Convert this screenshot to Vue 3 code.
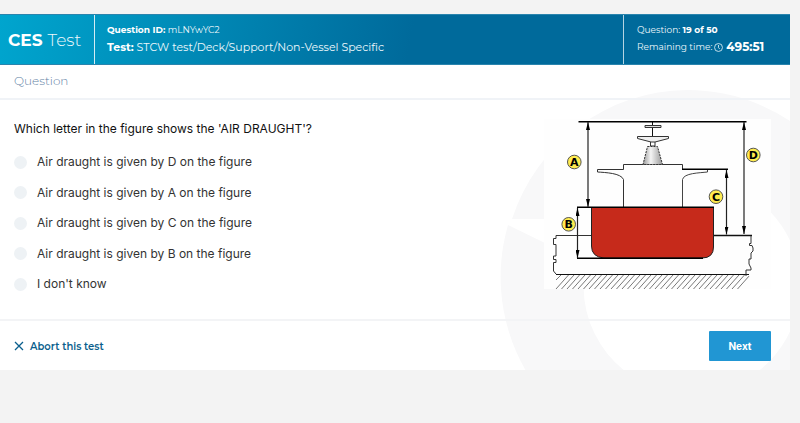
<template>
  <main class="test-card">
    <svg class="watermark" viewBox="0 0 290 281" aria-hidden="true">
      <path
        d="M 12 130 A 186 186 0 0 1 187 1 A 187 187 0 0 1 374 188 A 187 187 0 0 1 187 375 A 187 187 0 0 1 8 136 L 86 174 A 108 108 0 0 0 192 305 A 108 108 0 0 0 192 89 A 108 108 0 0 0 110 130 Z"
        fill="#f8f8f9"
      />
    </svg>

    <header class="test-header">
      <div class="brand"><strong>CES</strong> Test</div>
      <div class="test-info">
        <div class="question-id"><strong>Question ID:</strong> {{ test.questionId }}</div>
        <div class="test-name"><strong>Test:</strong> {{ test.name }}</div>
      </div>
      <div class="test-progress">
        <div>Question: <strong>{{ test.current }} of {{ test.total }}</strong></div>
        <div class="remaining">
          Remaining time:
          <svg class="clock" viewBox="0 0 10 10" aria-hidden="true">
            <circle cx="5" cy="5" r="4.4" />
            <path d="M5 2.2V5.2L6.4 6.6" />
          </svg>
          <strong class="time">{{ test.remaining }}</strong>
        </div>
      </div>
    </header>

    <h2 class="section-title">Question</h2>

    <section class="question-body">
      <div class="question-column">
        <p id="question-text" class="question-text">{{ question }}</p>
        <div class="answers" role="radiogroup" aria-labelledby="question-text">
          <label v-for="(answer, index) in answers" :key="index" class="answer">
            <input v-model="selected" type="radio" name="answer" :value="index" />
            <span>{{ answer }}</span>
          </label>
        </div>
      </div>

      <svg class="figure" viewBox="0 0 227 170" role="img" aria-labelledby="question-text">
        <defs>
          <linearGradient id="funnel">
            <stop offset="0" stop-color="#999" />
            <stop offset="0.4" stop-color="#f4f4f4" />
            <stop offset="1" stop-color="#999" />
          </linearGradient>
          <marker
            id="arrow"
            viewBox="0 0 8 4"
            refX="8"
            refY="2"
            markerWidth="8"
            markerHeight="4"
            markerUnits="userSpaceOnUse"
            orient="auto-start-reverse"
          >
            <path d="M0 0L8 2L0 4Z" />
          </marker>
        </defs>

        <rect width="227" height="170" fill="#fefefe" />

        <!-- sea bed -->
        <g stroke="#555" stroke-width="0.8">
          <line
            v-for="n in 34"
            :key="n"
            :x1="6.5 + n * 5.5"
            y1="170"
            :x2="Math.min(19 + n * 5.5, 205)"
            :y2="Math.max(156, 156 + (n * 5.5 - 186) * 1.12)"
          />
          <path d="M12 161L17 156" />
        </g>

        <g fill="none" stroke="#333" stroke-width="1">
          <path d="M12 155.5H205" stroke="#111" />
          <path d="M47 116.5H12V119.5H9.5V125.5H12V137H9.5V140.5H12V143.5H9.5V152L12 155" />
          <path d="M170 116.5H208" stroke="#111" stroke-width="1.4" />
          <path d="M207 117V124.5H205.5V126.5H208L209 129V132L207 134V140H205V145L207 149V151H202V157" />

          <!-- superstructure -->
          <path d="M79.5 88V60.5C77 54 61 53.5 53.5 53V50.5H79.5V45.5H138.5V50.5" />
          <path d="M138.5 88V60.5C140 54 155 54 163.5 53V50.5" stroke="#444" />

          <!-- mast and funnel -->
          <path d="M108.5 3V17.5" stroke="#111" />
          <path d="M101 6.5H117V8.5H101Z" fill="#ddd" />
          <path d="M93.5 17.5H124.5V19.5L111 23H107L93.5 19.5Z" fill="#f0f0f0" />
          <path d="M106.5 23V27H111V23" />
          <path d="M103.5 27.5H113.5L118.5 45.5H99Z" fill="url(#funnel)" stroke-dasharray="2 1" />
        </g>

        <path
          d="M47.5 88.5H169.5V128Q169.5 139 158 139H60Q47.5 138 47.5 127Z"
          fill="#c62a1b"
          stroke="#222"
        />

        <!-- measuring lines -->
        <g stroke="#000" stroke-width="1.4">
          <path d="M34.5 2.7H202.5M33 88.3H170M33 139.3H159M138 50.3H184" />
        </g>
        <g stroke="#222" stroke-width="1.2">
          <line
            v-for="mark in marks"
            :key="mark.letter"
            :x1="mark.x"
            :x2="mark.x"
            :y1="mark.top"
            :y2="mark.bottom"
            marker-start="url(#arrow)"
            marker-end="url(#arrow)"
          />
        </g>

        <g v-for="mark in marks" :key="mark.letter">
          <circle :cx="mark.cx" :cy="mark.cy" r="6.8" fill="#ffec4f" stroke="#444" stroke-width="0.9" />
          <text class="mark-letter" :x="mark.cx" :y="mark.cy + 4">{{ mark.letter }}</text>
        </g>
      </svg>
    </section>

    <footer class="test-footer">
      <button type="button" class="abort-btn">
        <svg viewBox="0 0 10 10" aria-hidden="true">
          <path d="M1 1L9 9M9 1L1 9" />
        </svg>
        Abort this test
      </button>
      <button type="button" class="next-btn">Next</button>
    </footer>
  </main>
</template>

<script setup>
import { ref } from 'vue'

const test = {
  questionId: 'mLNYwYC2',
  name: 'STCW test/Deck/Support/Non-Vessel Specific',
  current: 19,
  total: 50,
  remaining: '495:51'
}

const question = "Which letter in the figure shows the 'AIR DRAUGHT'?"

const answers = [
  'Air draught is given by D on the figure',
  'Air draught is given by A on the figure',
  'Air draught is given by C on the figure',
  'Air draught is given by B on the figure',
  "I don't know"
]

const selected = ref(null)

// arrows with their letter badges
const marks = [
  { letter: 'A', x: 44, top: 3, bottom: 88, cx: 30.3, cy: 43 },
  { letter: 'B', x: 33.5, top: 89, bottom: 139, cx: 24.7, cy: 105.3 },
  { letter: 'C', x: 182.5, top: 51, bottom: 115.5, cx: 172, cy: 77.7 },
  { letter: 'D', x: 200, top: 3, bottom: 115, cx: 209.3, cy: 36 }
]
</script>

<style>
body {
  margin: 0;
  background: #f3f3f3;
}
</style>

<style scoped>
.test-card {
  position: relative;
  margin: 14px 10px 0 0;
  background: #fff;
  color: #333;
  font-family: Inter, "Liberation Sans", sans-serif;
  font-size: 12px;
  line-height: 20px;
  overflow: hidden;
}

.watermark {
  position: absolute;
  right: 0;
  bottom: 0;
  width: 290px;
  height: 281px;
}

.test-header,
.section-title,
.question-body,
.test-footer {
  position: relative;
}

.test-header {
  display: flex;
  box-sizing: border-box;
  min-height: 51px;
  border: solid #2a84ad;
  border-width: 1px 0;
  background: linear-gradient(100deg, #00a5ce 0%, #006a9b 52%);
  color: #eef8fc;
  font-family: Montserrat, Inter, "Liberation Sans", sans-serif;
}

.test-header strong {
  color: #fff;
  font-weight: 700;
}

.brand {
  display: flex;
  align-items: center;
  gap: 5px;
  box-sizing: border-box;
  width: 95px;
  padding-left: 8px;
  border-right: 1px solid #d5ecf4;
  font-size: 17px;
  font-weight: 300;
}

.test-info {
  flex: 1;
  padding: 6px 12px;
}

.question-id {
  font-size: 9px;
  line-height: 18px;
}

.test-name {
  font-size: 11px;
  line-height: 16px;
}

.test-progress {
  box-sizing: border-box;
  width: 167px;
  padding: 6px 0 0 13px;
  border-left: 1px solid #b5d4e2;
  font-size: 9px;
  line-height: 18px;
}

.remaining {
  display: flex;
  align-items: center;
  line-height: 16px;
}

.clock {
  width: 9px;
  height: 9px;
  margin: 0 3px 0 2px;
  fill: none;
  stroke: #d5e9f1;
}

.time {
  font-size: 12px;
}

.section-title {
  margin: 0;
  padding: 6px 14px 7px;
  border-bottom: 2px solid #f0f3f7;
  color: #5f81a5;
  font-family: Montserrat, Inter, "Liberation Sans", sans-serif;
  font-size: 12px;
  font-weight: 300;
}

.question-body {
  display: flex;
  justify-content: space-between;
  padding: 19px 19px 25px 14px;
}

.question-text {
  margin: 0 0 13px;
  color: #111;
}

.answers {
  display: flex;
  flex-direction: column;
  justify-content: space-between;
  min-height: 142px;
}

.answer {
  display: flex;
  align-items: center;
  gap: 10px;
  cursor: pointer;
}

.answer input {
  appearance: none;
  width: 13px;
  height: 13px;
  margin: 0;
  border-radius: 50%;
  background: #eef2f5;
  cursor: pointer;
}

.answer input:checked {
  border: 4px solid #2196d3;
}

.figure {
  flex: none;
  width: 227px;
  height: 170px;
}

.mark-letter {
  fill: #000;
  font-family: "DejaVu Sans", Verdana, sans-serif;
  font-size: 11px;
  font-weight: 700;
  text-anchor: middle;
}

.test-footer {
  display: flex;
  align-items: center;
  justify-content: space-between;
  padding: 10px 19px 9px 14px;
  border-top: 2px solid #f3f4f6;
}

.abort-btn,
.next-btn {
  border: none;
  font-family: inherit;
  cursor: pointer;
}

.abort-btn {
  display: flex;
  align-items: center;
  gap: 6px;
  padding: 0;
  background: none;
  color: #0b5f8d;
  font-family: Montserrat, Inter, "Liberation Sans", sans-serif;
  font-size: 10px;
  font-weight: 600;
}

.abort-btn svg {
  width: 10px;
  height: 10px;
  fill: none;
  stroke: currentColor;
  stroke-width: 1.3;
}

.next-btn {
  width: 62px;
  height: 30px;
  border-radius: 1px;
  background: #2196d3;
  color: #fff;
  font-size: 10px;
  font-weight: 700;
}
</style>
